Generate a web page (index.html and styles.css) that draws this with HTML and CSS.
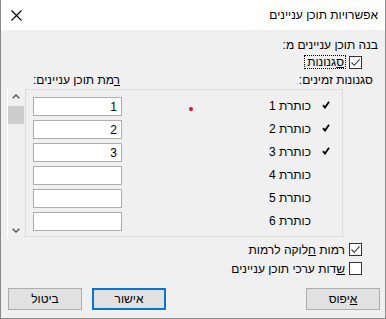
FILE: index.html
```html
<!doctype html>
<html lang="he">
<head>
<meta charset="utf-8"/>
<title>אפשרויות תוכן עניינים</title>
<link rel="stylesheet" href="styles.css">
</head>
<body>

<div class="dlg">
    <div class="titlebar">
        <span class="title">אפשרויות תוכן עניינים</span>
        <svg class="close" width="11" height="11" viewBox="0 0 11 11"><path d="M0.5 0.5L10.5 10.5M10.5 0.5L0.5 10.5" stroke="#000" stroke-width="1.1" fill="none"/></svg>
    </div>

    <div class="main">
        <div class="lead">בנה תוכן עניינים מ:</div>
        <div class="chk chk-styles">
            <span class="box"><svg width="11" height="11" viewBox="0 0 11 11"><path d="M1.5 5.5L4.2 8.3L9.6 2.4" stroke="#333" stroke-width="1.1" fill="none"/></svg></span>
            <span class="focus"><u>ס</u>גנונות</span>
        </div>

        <div class="cols">
            <span>סגנונות זמינים:</span>
            <span><u>ר</u>מת תוכן עניינים:</span>
        </div>

        <div class="list">
            <div class="panel">
                <div class="row"><span class="tick"><svg width="8" height="8" viewBox="0 0 8 8"><path d="M1 4.2L3 6.6L7 0.8" stroke="#000" stroke-width="1.8" fill="none"/></svg></span><span class="name">כותרת 1</span><input class="lvl" type="text" value="1"></div>
                <div class="row"><span class="tick"><svg width="8" height="8" viewBox="0 0 8 8"><path d="M1 4.2L3 6.6L7 0.8" stroke="#000" stroke-width="1.8" fill="none"/></svg></span><span class="name">כותרת 2</span><input class="lvl" type="text" value="2"></div>
                <div class="row"><span class="tick"><svg width="8" height="8" viewBox="0 0 8 8"><path d="M1 4.2L3 6.6L7 0.8" stroke="#000" stroke-width="1.8" fill="none"/></svg></span><span class="name">כותרת 3</span><input class="lvl" type="text" value="3"></div>
                <div class="row"><span class="tick"></span><span class="name">כותרת 4</span><input class="lvl" type="text" value=""></div>
                <div class="row"><span class="tick"></span><span class="name">כותרת 5</span><input class="lvl" type="text" value=""></div>
                <div class="row"><span class="tick"></span><span class="name">כותרת 6</span><input class="lvl" type="text" value=""></div>
                <i class="dot"></i>
            </div>
            <div class="scroll">
                <span class="arrow"><svg width="8" height="5" viewBox="0 0 8 5"><path d="M0.7 4.3L4 1L7.3 4.3" stroke="#606060" stroke-width="1.6" fill="none"/></svg></span>
                <span class="thumb"></span>
                <span class="track"></span>
                <span class="arrow"><svg width="8" height="5" viewBox="0 0 8 5"><path d="M0.7 0.7L4 4L7.3 0.7" stroke="#606060" stroke-width="1.6" fill="none"/></svg></span>
            </div>
        </div>

        <div class="opts">
            <div class="chk">
                <span class="box"><svg width="11" height="11" viewBox="0 0 11 11"><path d="M1.5 5.5L4.2 8.3L9.6 2.4" stroke="#333" stroke-width="1.1" fill="none"/></svg></span>
                <span>רמות <u>ח</u>לוקה לרמות</span>
            </div>
            <div class="chk">
                <span class="box"></span>
                <span><u>ש</u>דות ערכי תוכן עניינים</span>
            </div>
        </div>

        <div class="buttons">
            <button class="btn"><u>א</u>יפוס</button>
            <button class="btn default">אישור</button>
            <button class="btn">ביטול</button>
        </div>
    </div>
</div>

</body>
</html>
```

FILE: styles.css
```css
*{margin:0;padding:0;box-sizing:border-box}
body{font:12px "Liberation Sans","DejaVu Sans",sans-serif;color:#000;background:#fff}
u{text-decoration:underline;text-underline-offset:1px}

.dlg{width:386px;height:319px;border:1px solid #888;border-top:0;direction:rtl;background:#f0f0f0;display:flex;flex-direction:column}
.titlebar{height:30px;background:#fff;display:flex;align-items:center;justify-content:space-between;padding:0 7px 0 10px}
.title{line-height:16px}
.close{display:block}

.main{padding-top:7px;flex:1}
.lead{line-height:16px;padding-right:7px}

.chk{display:flex;align-items:center;height:19px;padding-right:23px}
.chk .box{width:13px;height:13px;border:1px solid #333;background:#fff;margin-left:4px;flex:none}
.chk .box svg{display:block}
.chk-styles{height:14px;margin-top:2px}
.chk-styles .box{margin-left:3px}
.focus{display:inline-block;height:14px;line-height:12px;border:1px dotted #000;padding:0 1px 0 2px}

.cols{display:flex;justify-content:space-between;line-height:15px;margin-top:4px;padding:0 12px 0 32px}

.list{display:flex;height:151px}
.panel{position:relative;width:318px;height:148px;margin:1px 42px 0 0;border:1px solid #dcdcdc;padding:7px 12px 0 7px;display:flex;flex-direction:column;gap:4px}
.row{display:flex;align-items:center;height:19px}
.tick{width:8px;height:8px;margin:0 0 3px 11px}
.tick svg{display:block}
.name{flex:1;line-height:19px}
.lvl{width:89px;height:19px;border:1px solid #adadad;background:#fff;font:inherit;color:#000;padding:0 4px;text-align:right;outline:0}
.dot{position:absolute;left:163px;top:17px;width:4px;height:4px;border-radius:50%;background:#e81123}

.scroll{direction:ltr;width:18px;height:151px;border-left:1px solid #fff;display:flex;flex-direction:column}
.arrow{height:17px;display:flex;align-items:center;justify-content:center;padding-right:2px}
.arrow svg{display:block}
.thumb{width:16px;height:18px;background:#cdcdcd;margin-top:1px}
.track{flex:1}

.opts{margin-top:1px}

.buttons{display:flex;margin-top:10px;padding:0 5px 0 7px}
.btn{width:74px;height:22px;border:1px solid #adadad;background:#e1e1e1;font:inherit;color:#000}
.btn.default{border:2px solid #0078d7;margin-right:auto;margin-left:10px}
```
